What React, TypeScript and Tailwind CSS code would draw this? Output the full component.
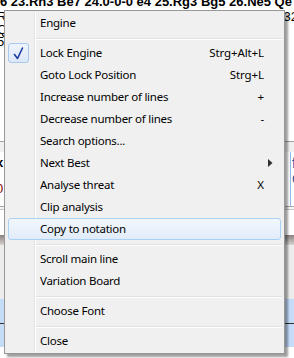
import React from "react";

type Item =
  | { kind: "sep" }
  | { kind: "item"; label: string; shortcut?: string; checked?: boolean; hover?: boolean; sub?: boolean };

const items: Item[] = [
  { kind: "item", label: "Engine" },
  { kind: "sep" },
  { kind: "item", label: "Lock Engine", shortcut: "Strg+Alt+L", checked: true },
  { kind: "item", label: "Goto Lock Position", shortcut: "Strg+L" },
  { kind: "item", label: "Increase number of lines", shortcut: "+" },
  { kind: "item", label: "Decrease number of lines", shortcut: "-" },
  { kind: "item", label: "Search options..." },
  { kind: "item", label: "Next Best", sub: true },
  { kind: "item", label: "Analyse threat", shortcut: "X" },
  { kind: "item", label: "Clip analysis" },
  { kind: "item", label: "Copy to notation", hover: true },
  { kind: "sep" },
  { kind: "item", label: "Scroll main line" },
  { kind: "item", label: "Variation Board" },
  { kind: "sep" },
  { kind: "item", label: "Choose Font" },
  { kind: "sep" },
  { kind: "item", label: "Close" },
];

function Row({ it }: { it: Extract<Item, { kind: "item" }> }) {
  return (
    <div className="relative h-[22px] flex items-center">
      {it.hover && (
        <div className="absolute left-[2px] right-[2px] top-0 bottom-0 rounded-[3px] border border-[#a9d0f5] bg-gradient-to-b from-[#f2f7fd] to-[#e1ecf9]" />
      )}
      {it.checked && (
        <div className="absolute left-[2px] top-[1px] w-[21px] h-[20px] rounded-[3px] border border-[#a7c7ec] bg-gradient-to-b from-[#eef4fc] to-[#dde8f8]">
          <svg width="21" height="20" viewBox="0 0 21 20" className="absolute left-[-1px] top-[-1px]">
            <path d="M6.5 11.5 L9.5 15.5 L14.5 5" fill="none" stroke="#1d3d9c" strokeWidth="1.6" strokeLinecap="round" strokeLinejoin="round" />
          </svg>
        </div>
      )}
      <span className="relative ml-[34px] text-[11.5px] tracking-[-0.25px] text-black leading-none">{it.label}</span>
      {it.shortcut && (
        <span className="relative ml-auto mr-[19px] text-[11.5px] tracking-[-0.1px] text-black leading-none">{it.shortcut}</span>
      )}
      {it.sub && (
        <svg width="5" height="8" viewBox="0 0 5 8" className="relative ml-auto mr-[10px]">
          <path d="M0 0 L4.5 4 L0 8 Z" fill="#303030" />
        </svg>
      )}
    </div>
  );
}

export default function App() {
  return (
    <div
      className="relative w-[294px] h-[358px] overflow-hidden bg-white"
      style={{ fontFamily: '"Noto Sans", "Open Sans", sans-serif' }}
    >
      {/* background content */}
      <div className="flex flex-col h-full">
        <div
          className="mt-[-5px] whitespace-nowrap text-[13px] font-bold text-black leading-[14px]"
          style={{ fontFamily: '"Liberation Sans", Arial, sans-serif' }}
        >
          6 23.Rh3 Be7 24.0-0-0 e4 25.Rg3 Bg5 26.Ne5 Qe
        </div>
        <div className="flex justify-between h-[40px] text-[13px] leading-[12.5px] text-black" style={{ fontFamily: '"Liberation Sans", Arial, sans-serif' }}>
          <div className="flex flex-col ml-[-3px] pt-[2px]">
            <span>R</span>
            <span>Q</span>
            <span>5</span>
          </div>
          <div className="pt-[2px] mr-[-4px]">32</div>
        </div>
        <div className="h-[92px]" />
        <div className="h-px bg-[#a0a0a0]" />
        <div className="h-[10px] bg-[#f0f0f0]" />
        <div className="flex justify-between h-[54px] text-[13px] leading-[13px]" style={{ fontFamily: '"Liberation Sans", Arial, sans-serif' }}>
          <div className="flex flex-col ml-[-4px] pt-[4px]">
            <span className="font-bold">x</span>
            <span className="text-[#7030a0]">:</span>
            <span className="text-[#800000]">0</span>
          </div>
          <div className="flex flex-col mr-[-6px] pt-[3px] border-l border-[#8fb8e8] pl-[1px] w-[10px] text-[14px] leading-[16px]">
            <span className="text-[#2050a0]">fd</span>
            <span className="text-[#2050a0]">C</span>
          </div>
        </div>
        <div className="h-px bg-[#a8a8a8]" />
        <div className="h-[2px] bg-[#f4f4f4]" />
        <div className="h-px bg-[#c8c8c8]" />
        <div className="h-[25px] bg-white" />
        <div className="h-[10px] bg-gradient-to-b from-[#8a8380] to-[#d8d4d2]" />
        <div className="h-[54px] bg-[#ececec]" />
        <div className="h-[24px] bg-[#c4dcf8]" />
        <div className="h-px bg-[#303030]" />
        <div className="h-[23px] bg-[#c4dcf8]" />
        <div className="flex-1 bg-white" />
      </div>

      {/* popup menu */}
      <div className="absolute left-[4px] top-[10px] w-[281px] border border-[#979797] bg-[#f0f0f0] p-[1px] shadow-[3px_3px_2px_rgba(0,0,0,0.38)]">
        <div className="absolute left-[29px] top-[1px] bottom-[1px] w-[2px] flex">
          <div className="w-px bg-[#e2e3e3]" />
          <div className="w-px bg-white" />
        </div>
        <div className="relative flex flex-col">
          {items.map((it, i) =>
            it.kind === "sep" ? (
              <div key={i} className="h-[8px] pt-[4px] pl-[30px] pr-[1px]">
                <div className="h-px bg-[#e0e0e0]" />
                <div className="h-px bg-white" />
              </div>
            ) : (
              <Row key={i} it={it} />
            )
          )}
        </div>
      </div>
    </div>
  );
}
